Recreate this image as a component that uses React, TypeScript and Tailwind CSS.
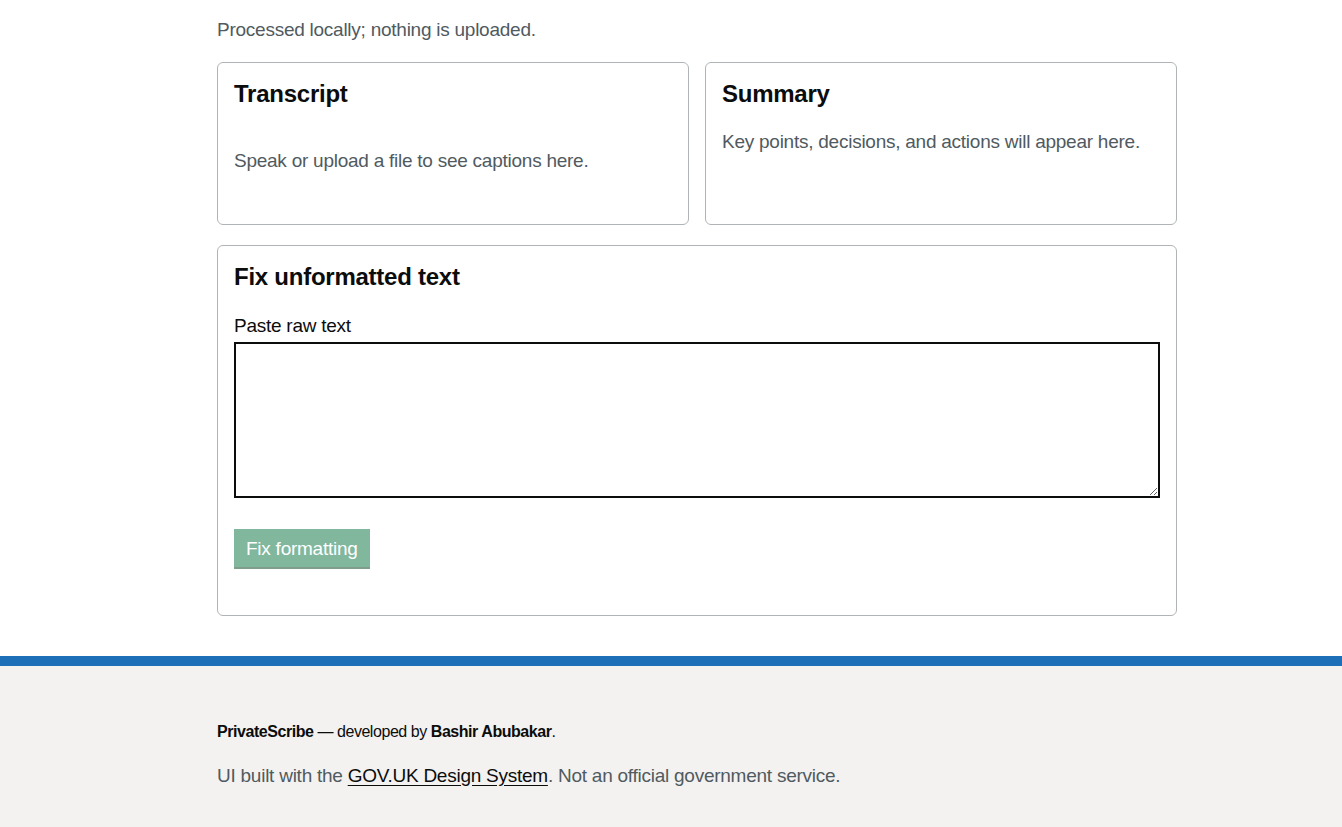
export default function App() {
  return (
    <div
      className="min-h-[827px] bg-white text-[#0b0c0c] flex flex-col tracking-[-0.25px]"
      style={{ fontFamily: '"Liberation Sans", Arial, sans-serif' }}
    >
      <main className="w-[960px] ml-[217px] flex-1 pt-[17px] pb-[40px]">
        <p className="text-[19px] leading-[25px] text-[#505a5f] mb-[20px]">
          Processed locally; nothing is uploaded.
        </p>

        <div className="grid grid-cols-2 gap-4">
          <section className="border border-[#b1b4b6] rounded-[6px] px-4 pt-4 h-[163px]">
            <h2 className="text-[24px] leading-[30px] font-bold">Transcript</h2>
            <p className="mt-[39px] text-[19px] leading-[25px] text-[#505a5f]">
              Speak or upload a file to see captions here.
            </p>
          </section>
          <section className="border border-[#b1b4b6] rounded-[6px] px-4 pt-4 h-[163px]">
            <h2 className="text-[24px] leading-[30px] font-bold">Summary</h2>
            <p className="mt-[20px] text-[19px] leading-[25px] text-[#505a5f]">
              Key points, decisions, and actions will appear here.
            </p>
          </section>
        </div>

        <section className="mt-[20px] border border-[#b1b4b6] rounded-[6px] px-4 pt-4 pb-[48px]">
          <h2 className="text-[24px] leading-[30px] font-bold">Fix unformatted text</h2>
          <label className="block mt-[21px] text-[19px] leading-[25px]">Paste raw text</label>
          <textarea className="block mt-[4px] w-full h-[156px] border-2 border-[#0b0c0c] p-[5px] text-[19px] outline-none" />
          <button
            disabled
            className="mt-[31px] h-[38px] px-[12px] bg-[#80b79d] text-white text-[19px] leading-[40px] shadow-[0_2px_0_#7f9f8c]"
          >
            Fix formatting
          </button>
        </section>
      </main>

      <footer className="border-t-[10px] border-[#1d70b8] bg-[#f3f2f1] h-[171px]">
        <div className="w-[960px] ml-[217px] pt-[56px]">
          <p className="text-[16px] leading-[20px] tracking-[-0.45px]">
            <strong className="font-bold">PrivateScribe</strong> — developed by{" "}
            <strong className="font-bold">Bashir Abubakar</strong>.
          </p>
          <p className="mt-[21px] text-[19px] leading-[25px] text-[#505a5f]">
            UI built with the{" "}
            <a href="#" className="text-[#0b0c0c] underline underline-offset-[3px]">
              GOV.UK Design System
            </a>
            . Not an official government service.
          </p>
        </div>
      </footer>
    </div>
  );
}
